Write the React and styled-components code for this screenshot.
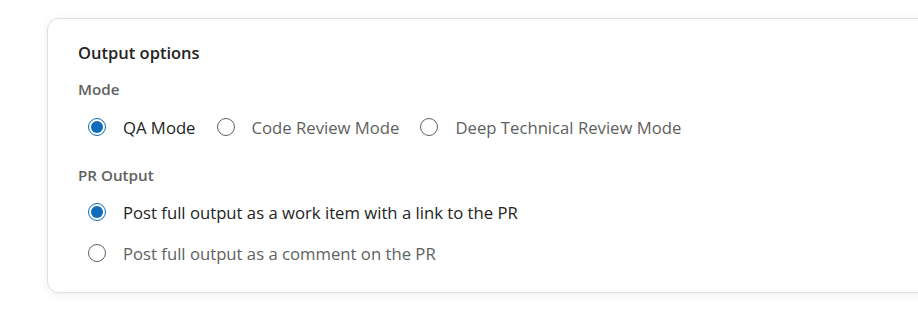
import styled, { createGlobalStyle } from "styled-components";

const GlobalStyle = createGlobalStyle`
  html, body {
    margin: 0;
    padding: 0;
    background: #ffffff;
  }
  body {
    font-family: "Open Sans", "Noto Sans", sans-serif;
    color: #242424;
  }
`;

const Page = styled.div`
  padding: 18px 0 0 47px;
  width: 918px;
  height: 314px;
  box-sizing: border-box;
  overflow: hidden;
`;

const Card = styled.section`
  width: 900px;
  height: 275px;
  box-sizing: border-box;
  border: 1px solid #e0e0e0;
  border-radius: 12px;
  background: #ffffff;
  box-shadow: 0 2px 8px rgba(0, 0, 0, 0.07);
  padding: 22px 30px;
`;

const Title = styled.h2`
  margin: 0;
  font-size: 16.5px;
  font-weight: 600;
  line-height: 24px;
  color: #242424;
`;

const Group = styled.div`
  margin-top: ${(p) => p.$top}px;
`;

const Label = styled.div`
  font-size: 15.2px;
  font-weight: 600;
  line-height: 20px;
  color: #616161;
`;

const Options = styled.div`
  display: flex;
  flex-direction: ${(p) => (p.$column ? "column" : "row")};
  gap: ${(p) => (p.$column ? "13px" : "21px")};
  margin-top: ${(p) => p.$top}px;
  padding-left: 10px;
`;

const Option = styled.label`
  display: flex;
  align-items: center;
  gap: 17px;
  height: 28px;
  font-size: 16.7px;
  color: ${(p) => (p.$checked ? "#242424" : "#616161")};
`;

const Circle = styled.span`
  width: 18px;
  height: 18px;
  box-sizing: border-box;
  border-radius: 50%;
  border: 1px solid ${(p) => (p.$checked ? "#0f6cbd" : "#616161")};
  display: flex;
  align-items: center;
  justify-content: center;
  flex-shrink: 0;

  &::after {
    content: "";
    display: ${(p) => (p.$checked ? "block" : "none")};
    width: 12px;
    height: 12px;
    border-radius: 50%;
    background: #0f6cbd;
  }
`;

function Radio({ label, checked }) {
  return (
    <Option $checked={checked}>
      <Circle $checked={checked} />
      {label}
    </Option>
  );
}

const modes = ["QA Mode", "Code Review Mode", "Deep Technical Review Mode"];
const prOutputs = [
  "Post full output as a work item with a link to the PR",
  "Post full output as a comment on the PR",
];

export default function App() {
  return (
    <>
      <GlobalStyle />
      <Page>
        <Card>
          <Title>Output options</Title>
          <Group $top={14}>
            <Label>Mode</Label>
            <Options $top={14}>
              {modes.map((m, i) => (
                <Radio key={m} label={m} checked={i === 0} />
              ))}
            </Options>
          </Group>
          <Group $top={24}>
            <Label>PR Output</Label>
            <Options $column $top={13}>
              {prOutputs.map((m, i) => (
                <Radio key={m} label={m} checked={i === 0} />
              ))}
            </Options>
          </Group>
        </Card>
      </Page>
    </>
  );
}
